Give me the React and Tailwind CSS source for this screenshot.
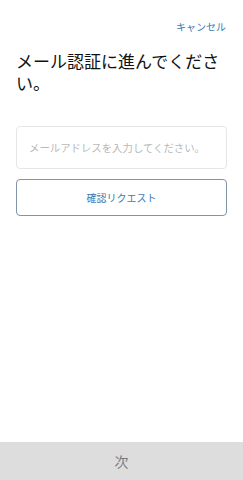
import React from 'react';

const FONT = { fontFamily: '"Noto Sans CJK JP", "Noto Sans", sans-serif' };

export default function App() {
  return (
    <div className="w-[243px] h-[480px] bg-white flex flex-col" style={FONT}>
      {/* Header */}
      <div className="flex justify-end pr-[17px] pt-[13px] h-[40px]">
        <button className="text-[10px] leading-[16px] text-[#3a78b5]">キャンセル</button>
      </div>

      {/* Content */}
      <div className="flex-1 px-4">
        <h1 className="text-[17px] leading-[22px] text-[#111] font-normal mt-[10px]">
          メール認証に進んでください。
        </h1>

        <input
          type="email"
          placeholder="メールアドレスを入力してください。"
          className="mt-[32px] w-full h-[43px] rounded-[4px] border border-[#e6e6e6] px-[12px] text-[10.4px] text-[#333] placeholder:text-[#b8b8b8] outline-none"
          style={FONT}
        />

        <button className="mt-[10px] w-full h-[37px] rounded-[4px] border border-[#8494a8] text-[10px] text-[#3d78b0] flex items-center justify-center">
          確認リクエスト
        </button>
      </div>

      {/* Footer */}
      <div className="h-[38px] bg-[#dddddd] flex items-center justify-center">
        <span className="text-[14px] text-[#7a7a7a]">次</span>
      </div>
    </div>
  );
}
